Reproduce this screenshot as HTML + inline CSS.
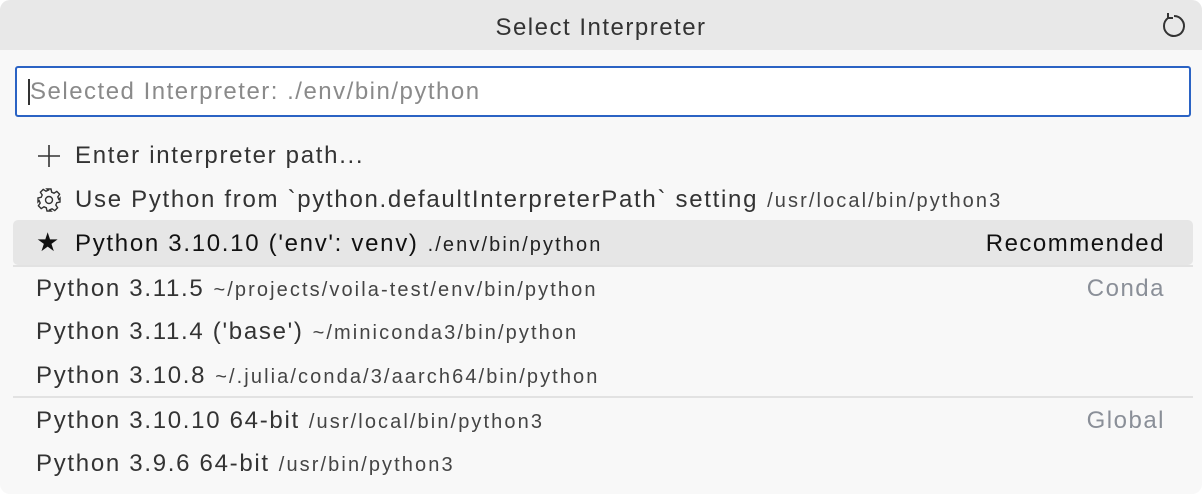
<!DOCTYPE html>
<html><head><style>
html,body{margin:0;padding:0;width:1202px;height:494px;overflow:hidden;background:#fff;}
body{font-family:"Liberation Sans",sans-serif;}
.panel{position:absolute;left:0;top:0;width:1202px;height:494px;background:#f8f8f8;border-radius:10px;overflow:hidden;}
.hdr{position:absolute;left:0;top:0;width:1202px;height:50px;background:#e8e8e8;}
.title{position:absolute;left:0;width:1202px;top:14px;text-align:center;font-size:24px;letter-spacing:1.5px;color:#333;}
.input{position:absolute;left:15px;top:66px;width:1172px;height:47px;border:2px solid #2b63c4;border-radius:3px;background:#fff;}
.input span{position:absolute;left:13px;top:10px;font-size:24px;letter-spacing:1.5px;color:#8a8a8a;}
.input i{position:absolute;left:11px;top:11px;width:2px;height:26px;background:#333;}
.row{position:absolute;left:0;width:1202px;height:44px;font-size:24px;letter-spacing:1.7px;color:#333;}
.row .t{position:absolute;top:8px;white-space:nowrap;}
.row .d{font-size:20px;letter-spacing:2.1px;color:#444;margin-left:9px;}
.row .r{position:absolute;right:37px;top:8px;color:#8a8f98;letter-spacing:1.5px;}
.sel{position:absolute;left:13px;top:220px;width:1180px;height:45px;background:#e6e6e6;border-radius:5px;}
.sep{position:absolute;left:13px;width:1180px;height:2px;background:#e2e2e2;}
</style></head><body>
<div class="panel">
<div class="hdr"></div>
<div class="title">Select Interpreter</div>
<svg style="position:absolute;left:1160px;top:12px" width="28" height="28" viewBox="0 0 28 28"><path d="M8 6 A10 10 0 1 0 14 4" fill="none" stroke="#333" stroke-width="2"/><path d="M8 1 V6 H13" fill="none" stroke="#333" stroke-width="2"/></svg>
<div class="input"><i></i><span>Selected Interpreter: ./env/bin/python</span></div>

<div class="row" style="top:134px"><svg style="position:absolute;left:37px;top:10px" width="24" height="24"><path d="M12 1V23M1 12H23" stroke="#333" stroke-width="1.6"/></svg><span class="t" style="left:75px">Enter interpreter path...</span></div>

<div class="row" style="top:178px"><svg style="position:absolute;left:36px;top:9px" width="26" height="26" viewBox="0 0 26 26"><path d="M11 2h4l.7 3.2 2.3 1 2.8-1.8 2.8 2.8-1.8 2.8 1 2.3L24 11v4l-3.2.7-1 2.3 1.8 2.8-2.8 2.8-2.8-1.8-2.3 1L15 24h-4l-.7-3.2-2.3-1-2.8 1.8-2.8-2.8 1.8-2.8-1-2.3L2 15v-4l3.2-.7 1-2.3-1.8-2.8 2.8-2.8 2.8 1.8 2.3-1z" fill="none" stroke="#333" stroke-width="1.4"/><circle cx="13" cy="13" r="3.5" fill="none" stroke="#333" stroke-width="1.4"/></svg><span class="t" style="left:75px">Use Python from `python.defaultInterpreterPath` setting<span class="d">/usr/local/bin/python3</span></span></div>

<div class="sel"></div>
<div class="row" style="top:222px;color:#111"><span class="t" style="left:36px;font-size:26px;top:5px">★</span><span class="t" style="left:75px">Python 3.10.10 ('env': venv)<span class="d" style="color:#222">./env/bin/python</span></span><span class="r" style="color:#111">Recommended</span></div>
<div class="sep" style="top:265px"></div>

<div class="row" style="top:267px"><span class="t" style="left:36px">Python 3.11.5<span class="d">~/projects/voila-test/env/bin/python</span></span><span class="r">Conda</span></div>
<div class="row" style="top:310px"><span class="t" style="left:36px">Python 3.11.4 ('base')<span class="d">~/miniconda3/bin/python</span></span></div>
<div class="row" style="top:354px"><span class="t" style="left:36px">Python 3.10.8<span class="d">~/.julia/conda/3/aarch64/bin/python</span></span></div>
<div class="sep" style="top:396px"></div>
<div class="row" style="top:399px"><span class="t" style="left:36px">Python 3.10.10 64-bit<span class="d">/usr/local/bin/python3</span></span><span class="r">Global</span></div>
<div class="row" style="top:442px"><span class="t" style="left:36px">Python 3.9.6 64-bit<span class="d">/usr/bin/python3</span></span></div>
</div>
</body></html>
